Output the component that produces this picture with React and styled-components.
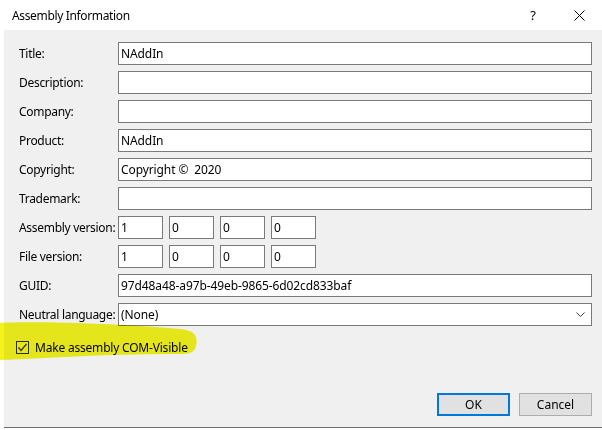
import React from 'react';
import styled, { createGlobalStyle } from 'styled-components';

const GlobalStyle = createGlobalStyle`
  body {
    margin: 0;
    background: #ffffff;
    font-family: "Noto Sans", "Liberation Sans", sans-serif;
    font-size: 12px;
    color: #000;
  }
`

const Window = styled.div`
  position: relative;
  width: 602px;
  height: 430px;
  display: flex;
  flex-direction: column;
  background: #ffffff;
  overflow: hidden;
`

const TitleBar = styled.div`
  height: 30px;
  flex: none;
  display: flex;
  align-items: center;
  padding-left: 12px;
`

const Caption = styled.div`
  flex: 1;
  font-size: 12px;
  letter-spacing: -0.35px;
`

const TitleButton = styled.div`
  width: 46px;
  height: 30px;
  display: flex;
  align-items: center;
  justify-content: center;
  font-size: 13px;
`

const Body = styled.div`
  flex: 1;
  margin: 0 0 2px 4px;
  background: #f0f0f0;
  border-bottom: 1px solid #6e6e6e;
  padding: 12px 10px 11px 15px;
  display: flex;
  flex-direction: column;
`

const Form = styled.div`
  display: grid;
  grid-template-columns: 99px 1fr;
  grid-auto-rows: 23px;
  row-gap: 6px;
`

const Label = styled.div`
  display: flex;
  align-items: center;
  white-space: nowrap;
  letter-spacing: -0.3px;
`

const TextBox = styled.div`
  box-sizing: border-box;
  width: ${props => props.width ? props.width + 'px' : '100%'};
  height: 23px;
  border: 1px solid #7a7a7a;
  background: #ffffff;
  padding: 0 3px 0 2px;
  display: flex;
  align-items: center;
  white-space: pre;
  overflow: hidden;
  letter-spacing: -0.1px;
`

const VersionGroup = styled.div`
  display: flex;
  gap: 6px;
`

const Combo = styled(TextBox)`
  justify-content: space-between;
  padding-right: 6px;
`

const CheckRow = styled.label`
  margin: 13px 0 0 -3px;
  display: flex;
  align-items: center;
  gap: 6px;
  position: relative;
  z-index: 1;
  letter-spacing: -0.2px;
`

const CheckBox = styled.span`
  box-sizing: border-box;
  width: 13px;
  height: 13px;
  border: 1px solid #333333;
  display: flex;
  align-items: center;
  justify-content: center;
`

const Footer = styled.div`
  margin-top: auto;
  display: flex;
  justify-content: flex-end;
  gap: 9px;
`

const Button = styled.div`
  box-sizing: border-box;
  width: 73px;
  height: 23px;
  background: #e1e1e1;
  border: ${props => props.primary ? '2px solid #0078d7' : '1px solid #adadad'};
  display: flex;
  align-items: center;
  justify-content: center;
`

const Highlight = styled.svg`
  position: absolute;
  left: 0;
  top: 320px;
  mix-blend-mode: multiply;
  pointer-events: none;
  z-index: 2;
`

const fields = [
  ['Title:', 'NAddIn'],
  ['Description:', ''],
  ['Company:', ''],
  ['Product:', 'NAddIn'],
  ['Copyright:', 'Copyright \u00a9  2020'],
  ['Trademark:', ''],
]

const versions = [
  ['Assembly version:', ['1', '0', '0', '0']],
  ['File version:', ['1', '0', '0', '0']],
]

const App = () => {
  return (<Window>
    <GlobalStyle />
    <TitleBar>
      <Caption>Assembly Information</Caption>
      <TitleButton>?</TitleButton>
      <TitleButton>
        <svg width="11" height="11" viewBox="0 0 11 11">
          <path d="M0.5 0.5 L10.5 10.5 M10.5 0.5 L0.5 10.5" stroke="#000" strokeWidth="1" />
        </svg>
      </TitleButton>
    </TitleBar>
    <Body>
      <Form>
        {fields.map(([label, value]) => <React.Fragment key={label}>
          <Label>{label}</Label>
          <TextBox>{value}</TextBox>
        </React.Fragment>)}
        {versions.map(([label, parts]) => <React.Fragment key={label}>
          <Label>{label}</Label>
          <VersionGroup>
            {parts.map((part, index) => <TextBox key={index} width={45}>{part}</TextBox>)}
          </VersionGroup>
        </React.Fragment>)}
        <Label>GUID:</Label>
        <TextBox>97d48a48-a97b-49eb-9865-6d02cd833baf</TextBox>
        <Label>Neutral language:</Label>
        <Combo>
          <span>(None)</span>
          <svg width="9" height="5" viewBox="0 0 9 5">
            <path d="M0.5 0.5 L4.5 4.5 L8.5 0.5" fill="none" stroke="#444" strokeWidth="1" />
          </svg>
        </Combo>
      </Form>
      <CheckRow>
        <CheckBox>
          <svg width="11" height="11" viewBox="0 0 11 11">
            <path d="M1.5 5.5 L4 8.5 L9.5 2" fill="none" stroke="#333" strokeWidth="1.2" />
          </svg>
        </CheckBox>
        <span>Make assembly COM-Visible</span>
      </CheckRow>
      <Footer>
        <Button primary>OK</Button>
        <Button>Cancel</Button>
      </Footer>
    </Body>
    <Highlight width="205" height="44" viewBox="0 0 205 44">
      <path d="M0 3 C40 1 120 4 180 9 C196 10 198 18 196 26 C194 35 186 34 170 34 C110 34 50 38 0 40 Z" fill="#f4f41c" />
    </Highlight>
  </Window>
  );
}

export default App;
